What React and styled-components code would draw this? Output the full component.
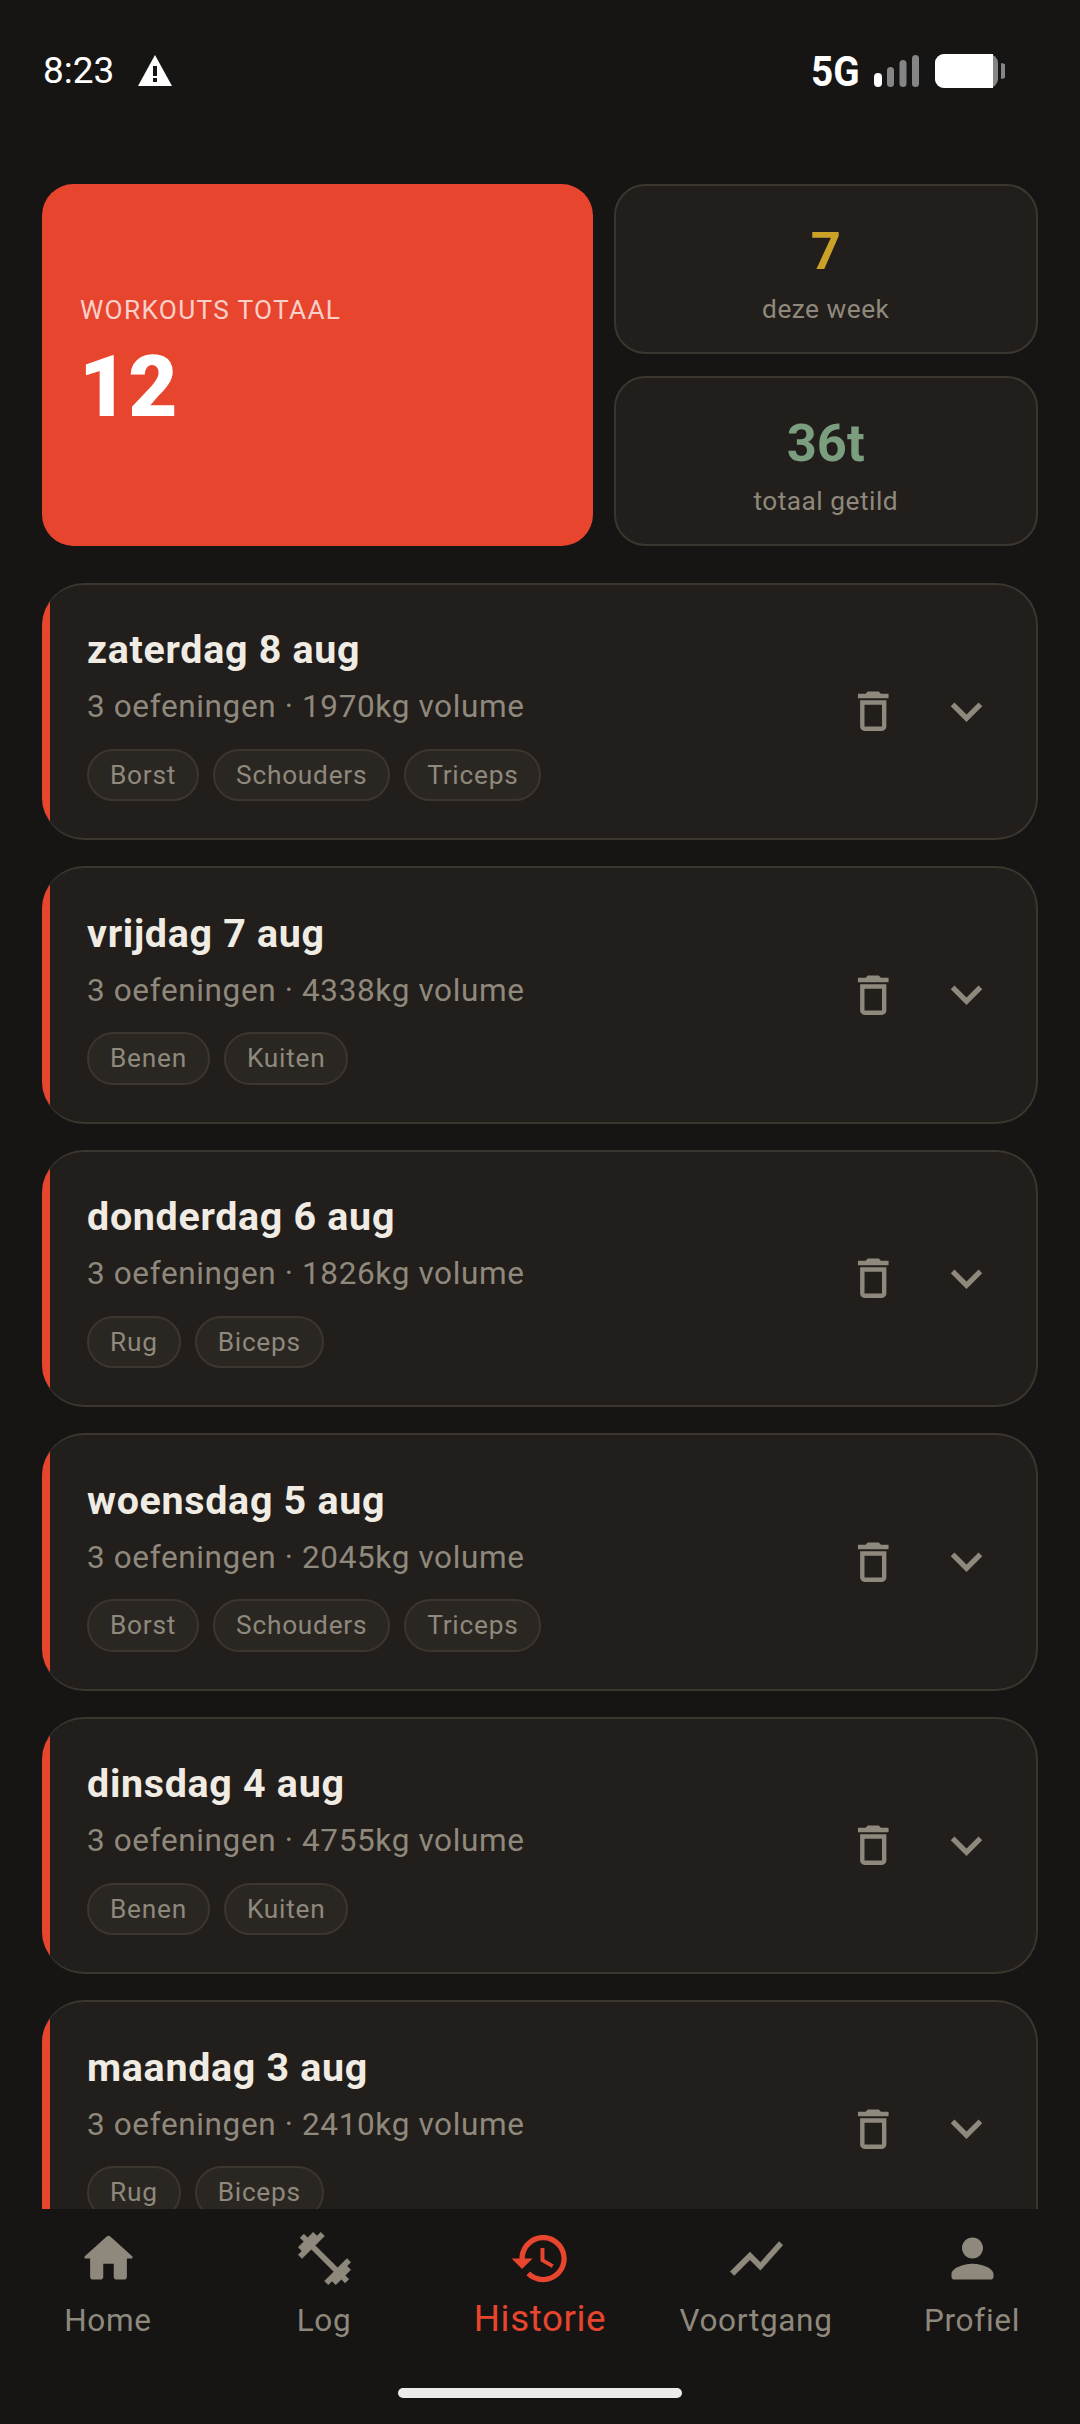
import React from "react";
import styled, { createGlobalStyle } from "styled-components";

const GlobalStyle = createGlobalStyle`
  html, body {
    margin: 0;
    padding: 0;
    background: #161514;
  }
  * {
    box-sizing: border-box;
  }
`;

const Screen = styled.div`
  width: 1080px;
  height: 2424px;
  display: flex;
  flex-direction: column;
  overflow: hidden;
  background: #161514;
  font-family: Roboto, "Liberation Sans", sans-serif;
`;

const StatusBar = styled.div`
  flex: none;
  height: 184px;
  padding: 52px 75px 0 43px;
  display: flex;
  align-items: flex-start;
  justify-content: space-between;
  color: #fff;
`;

const StatusGroup = styled.div`
  display: flex;
  align-items: center;
  height: 38px;
`;

const Clock = styled.span`
  font-size: 37px;
  line-height: 38px;
  margin-right: 24px;
`;

const NetworkLabel = styled.span`
  font-size: 43px;
  line-height: 38px;
  font-weight: 700;
  display: inline-block;
  width: 48px;
  margin-right: 15px;
  transform: scaleX(0.9);
  transform-origin: left center;
`;

const BatteryGap = styled.div`
  width: 15px;
`;

const Content = styled.div`
  flex: 1;
  min-height: 0;
  overflow: hidden;
  padding: 0 42.5px 0 42px;
  display: flex;
  flex-direction: column;
  gap: 26.25px;
`;

const StatsGrid = styled.div`
  flex: none;
  display: grid;
  grid-template-columns: 551px 1fr;
  grid-template-rows: 170px 170px;
  gap: 22px 21px;
  margin-bottom: 10.5px;
`;

const HeroCard = styled.div`
  grid-row: 1 / 3;
  background: #e8452e;
  border-radius: 31.5px;
  padding: 0 38px;
  display: flex;
  flex-direction: column;
  justify-content: center;
`;

const HeroLabel = styled.div`
  font-size: 26.25px;
  line-height: 32px;
  letter-spacing: 1.3px;
  color: rgba(255, 255, 255, 0.75);
`;

const HeroValue = styled.div`
  font-size: 85px;
  line-height: 98px;
  font-weight: 900;
  color: #fff;
  margin: 12px 0 0 -1px;
`;

const StatCard = styled.div`
  background: #211e1b;
  border: 2.6px solid #3b362e;
  border-radius: 31.5px;
  padding-top: 9px;
  display: flex;
  flex-direction: column;
  align-items: center;
  justify-content: center;
`;

const StatValue = styled.div`
  font-size: 52.5px;
  line-height: 62px;
  font-weight: 700;
  color: ${(p) => p.$color};
`;

const StatLabel = styled.div`
  font-size: 26.25px;
  line-height: 36px;
  letter-spacing: 0.5px;
  color: #8f897d;
  margin-top: 9px;
`;

const WorkoutCard = styled.div`
  flex: none;
  position: relative;
  height: 257.25px;
  overflow: hidden;
  display: flex;
  align-items: center;
  padding: 0 37.5px 0 45px;
  background: #211e1b;
  border-style: solid;
  border-color: #3b362e;
  border-width: 2.6px 2.6px 2.6px 0;
  border-radius: 42px;

  &::before {
    content: "";
    position: absolute;
    left: 0;
    top: 0;
    bottom: 0;
    width: 8px;
    background: #e8452e;
  }
`;

const WorkoutMain = styled.div`
  flex: 1;
  min-width: 0;
  padding-top: 3.4px;
`;

const WorkoutTitle = styled.div`
  font-size: 39.4px;
  line-height: 50px;
  font-weight: 700;
  letter-spacing: 0.7px;
  color: #f0ece4;
`;

const WorkoutMeta = styled.div`
  font-size: 31.5px;
  line-height: 40px;
  letter-spacing: 0.63px;
  color: #8f897d;
  margin-top: 12px;
`;

const TagRow = styled.div`
  display: flex;
  gap: 14px;
  margin-top: 21.5px;
`;

const Tag = styled.span`
  height: 52.5px;
  padding: 0 21px;
  display: flex;
  align-items: center;
  border: 2.6px solid #3b362e;
  border-radius: 26.25px;
  background: #2a2722;
  font-size: 26.25px;
  letter-spacing: 0.75px;
  color: #8f897d;
`;

const Actions = styled.div`
  flex: none;
  display: flex;
  align-items: center;
  gap: 35.25px;
  color: #8f897d;
`;

const BottomNav = styled.nav`
  flex: none;
  position: relative;
  height: 215px;
  padding-top: 18px;
  background: #161514;
  display: grid;
  grid-template-columns: repeat(5, 1fr);
  align-items: start;
`;

const NavItem = styled.div`
  display: flex;
  flex-direction: column;
  align-items: center;
  color: ${(p) => (p.$active ? "#e8452e" : "#8f897d")};
`;

const NavLabel = styled.span`
  height: 50px;
  display: flex;
  align-items: center;
  margin-top: ${(p) => (p.$active ? "3px" : "5px")};
  font-size: ${(p) => (p.$active ? "36.75px" : "31.5px")};
  letter-spacing: ${(p) => (p.$active ? "0.6px" : "0.7px")};
  white-space: nowrap;
`;

const HomeIndicator = styled.div`
  position: absolute;
  left: 398px;
  top: 179px;
  width: 284px;
  height: 10px;
  border-radius: 5px;
  background: #ecedea;
`;

const Icon = ({ d, size = 63, rounded }) => (
  <svg
    width={size}
    height={size}
    viewBox="0 0 24 24"
    fill="currentColor"
    stroke={rounded ? "currentColor" : "none"}
    strokeWidth={rounded ? 0.18 : 0}
    strokeLinejoin="round"
  >
    <path d={d} />
  </svg>
);

const paths = {
  home: "M10 19v-5h4v5c0 .55.45 1 1 1h3c.55 0 1-.45 1-1v-7h1.7c.46 0 .68-.57.33-.87L12.67 3.6c-.38-.34-.96-.34-1.34 0l-8.36 7.53c-.34.3-.13.87.33.87H5v7c0 .55.45 1 1 1h3c.55 0 1-.45 1-1z",
  log: "M20.57 14.86L22 13.43 20.57 12 17 15.57 8.43 7 12 3.43 10.57 2 9.14 3.43 7.71 2 5.57 4.14 4.14 2.71 2.71 4.14l1.43 1.43L2 7.71l1.43 1.43L2 10.57 3.43 12 7 8.43 15.57 17 12 20.57 13.43 22l1.43-1.43L16.29 22l2.14-2.14 1.43 1.43 1.43-1.43-1.43-1.43L22 16.29z",
  history: "M13 3c-4.97 0-9 4.03-9 9H1l3.89 3.89.07.14L9 12H6c0-3.87 3.13-7 7-7s7 3.13 7 7-3.13 7-7 7c-1.93 0-3.68-.79-4.94-2.06l-1.42 1.42C8.27 19.99 10.51 21 13 21c4.97 0 9-4.03 9-9s-4.03-9-9-9zm-1 5v5l4.28 2.54.72-1.21-3.5-2.08V8H12z",
  chart: "M3.5 18.49l6-6.01 4 4L22 6.92l-1.41-1.41-7.09 7.97-4-4L2 16.99z",
  person: "M12 12c2.21 0 4-1.79 4-4s-1.79-4-4-4-4 1.79-4 4 1.79 4 4 4zm0 2c-2.67 0-8 1.34-8 4v1c0 .55.45 1 1 1h14c.55 0 1-.45 1-1v-1c0-2.66-5.33-4-8-4z",
  trash: "M6 19c0 1.1.9 2 2 2h8c1.1 0 2-.9 2-2V7H6v12zM8 9h8v10H8V9zm7.5-5l-1-1h-5l-1 1H5v2h14V4z",
  chevron: "M16.59 8.59L12 13.17 7.41 8.59 6 10l6 6 6-6z",
};

const WarningIcon = () => (
  <svg width="34" height="32" viewBox="0 0 34 32">
    <path d="M17 0L34 31H0z" fill="#fff" />
    <rect x="15" y="11" width="4" height="10" fill="#161514" />
    <rect x="15" y="23" width="4" height="4" fill="#161514" />
  </svg>
);

const SignalIcon = () => (
  <svg width="46" height="34" viewBox="0 0 46 34">
    <rect x="0" y="19" width="8" height="14" rx="4" fill="#fff" />
    <rect x="13" y="13" width="7" height="20" rx="3.5" fill="#858585" />
    <rect x="25.5" y="6" width="7" height="27" rx="3.5" fill="#858585" />
    <rect x="38" y="1" width="7" height="32" rx="3.5" fill="#858585" />
  </svg>
);

const BatteryIcon = () => (
  <svg width="70" height="34" viewBox="0 0 70 34">
    <rect x="0" y="0" width="63" height="34" rx="9" fill="#858585" />
    <path d="M9 0H58V34H9A9 9 0 0 1 0 25V9A9 9 0 0 1 9 0z" fill="#fff" />
    <path d="M66 9l4 1v14l-4 1z" fill="#858585" />
  </svg>
);

const workouts = [
  { title: "zaterdag 8 aug", volume: 1970, tags: ["Borst", "Schouders", "Triceps"] },
  { title: "vrijdag 7 aug", volume: 4338, tags: ["Benen", "Kuiten"] },
  { title: "donderdag 6 aug", volume: 1826, tags: ["Rug", "Biceps"] },
  { title: "woensdag 5 aug", volume: 2045, tags: ["Borst", "Schouders", "Triceps"] },
  { title: "dinsdag 4 aug", volume: 4755, tags: ["Benen", "Kuiten"] },
  { title: "maandag 3 aug", volume: 2410, tags: ["Rug", "Biceps"] },
];

const navItems = [
  { label: "Home", icon: paths.home },
  { label: "Log", icon: paths.log, rounded: true },
  { label: "Historie", icon: paths.history, active: true },
  { label: "Voortgang", icon: paths.chart, rounded: true },
  { label: "Profiel", icon: paths.person },
];

function App() {
  return (
    <Screen>
      <GlobalStyle />
      <StatusBar>
        <StatusGroup>
          <Clock>8:23</Clock>
          <WarningIcon />
        </StatusGroup>
        <StatusGroup>
          <NetworkLabel>5G</NetworkLabel>
          <SignalIcon />
          <BatteryGap />
          <BatteryIcon />
        </StatusGroup>
      </StatusBar>
      <Content>
        <StatsGrid>
          <HeroCard>
            <HeroLabel>WORKOUTS TOTAAL</HeroLabel>
            <HeroValue>12</HeroValue>
          </HeroCard>
          <StatCard>
            <StatValue $color="#c9a227">7</StatValue>
            <StatLabel>deze week</StatLabel>
          </StatCard>
          <StatCard>
            <StatValue $color="#7a9e7e">36t</StatValue>
            <StatLabel>totaal getild</StatLabel>
          </StatCard>
        </StatsGrid>
        {workouts.map((workout) => (
          <WorkoutCard key={workout.title}>
            <WorkoutMain>
              <WorkoutTitle>{workout.title}</WorkoutTitle>
              <WorkoutMeta>3 oefeningen · {workout.volume}kg volume</WorkoutMeta>
              <TagRow>
                {workout.tags.map((tag) => (
                  <Tag key={tag}>{tag}</Tag>
                ))}
              </TagRow>
            </WorkoutMain>
            <Actions>
              <Icon d={paths.trash} size={52.5} />
              <Icon d={paths.chevron} />
            </Actions>
          </WorkoutCard>
        ))}
      </Content>
      <BottomNav>
        {navItems.map((item) => (
          <NavItem key={item.label} $active={item.active}>
            <Icon d={item.icon} rounded={item.rounded} />
            <NavLabel $active={item.active}>{item.label}</NavLabel>
          </NavItem>
        ))}
        <HomeIndicator />
      </BottomNav>
    </Screen>
  );
}

export default App;
